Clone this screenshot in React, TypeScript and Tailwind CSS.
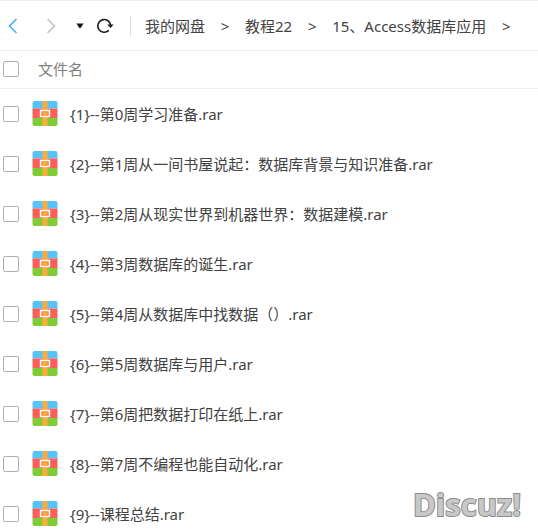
const files = [
  '{1}--第0周学习准备.rar',
  '{2}--第1周从一间书屋说起：数据库背景与知识准备.rar',
  '{3}--第2周从现实世界到机器世界：数据建模.rar',
  '{4}--第3周数据库的诞生.rar',
  '{5}--第4周从数据库中找数据（）.rar',
  '{6}--第5周数据库与用户.rar',
  '{7}--第6周把数据打印在纸上.rar',
  '{8}--第7周不编程也能自动化.rar',
  '{9}--课程总结.rar',
];

const crumbs = ['我的网盘', '教程22', '15、Access数据库应用'];

function Checkbox({ label }: { label: string }) {
  return (
    <input
      type="checkbox"
      aria-label={label}
      className="block size-4 appearance-none rounded-xs border border-[#b0b0b0] bg-white checked:bg-[#3db2f5]"
    />
  );
}

function ArchiveIcon() {
  return (
    <svg viewBox="0 0 26 26" className="block size-[26px]" aria-hidden="true">
      <path d="M0.5 8.5V3Q0.5 1 2.5 1H23.5Q25.5 1 25.5 3V8.5Z" fill="#56c4f8" />
      <path d="M0.5 8.5H25.5V18H0.5Z" fill="#fb5f5c" />
      <path d="M0.5 18H25.5V24Q25.5 26 23.5 26H2.5Q0.5 26 0.5 24Z" fill="#80cc37" />
      <path d="M10.5 1H15.5V26H10.5Z" fill="#fdac3b" />
      <path d="M8.5 10.5H17.5V16.5H8.5Z" fill="#fb8a4c" stroke="#fff" strokeWidth="1.4" />
      <path d="M10.8 11.2H15.2V15.8H10.8Z" fill="#fdac3b" />
    </svg>
  );
}

function Toolbar() {
  return (
    <header className="flex h-[51px] items-center border-y border-[#eeeeee] pl-2">
      <button type="button" aria-label="后退">
        <svg viewBox="0 0 10 16" className="block h-4 w-[10px]" fill="none" stroke="#3db2f5" strokeWidth="1.6">
          <path d="M8.5 1L1.5 8L8.5 15" />
        </svg>
      </button>
      <button type="button" aria-label="前进" className="ml-7">
        <svg viewBox="0 0 10 16" className="block h-4 w-[10px]" fill="none" stroke="#c4c4c4" strokeWidth="1.6">
          <path d="M1.5 1L8.5 8L1.5 15" />
        </svg>
      </button>
      <button type="button" aria-label="历史记录" className="ml-5">
        <svg viewBox="0 0 8 6" className="block h-[6px] w-2" fill="#111">
          <path d="M0.5 0.5H7.5L4.8 4.8Q4 5.6 3.2 4.8Z" />
        </svg>
      </button>
      <button type="button" aria-label="刷新" className="ml-3">
        <svg viewBox="0 0 18 16" className="block h-4 w-[18px]" fill="none" stroke="#1c1c1c" strokeWidth="1.6">
          <path d="M12.8 12.4A6.4 6.4 0 1 1 14.6 7.2" />
          <path d="M11.2 6.4H17.6L14.6 10Z" fill="#1c1c1c" stroke="none" />
        </svg>
      </button>
      <nav aria-label="路径" className="ml-4 flex h-5 items-center border-l border-[#dedede] pl-[14px]">
        {crumbs.map((name) => (
          <span key={name} className="flex items-center whitespace-nowrap">
            <a href="#">{name}</a>
            <span className="w-10 text-center">&gt;</span>
          </span>
        ))}
      </nav>
    </header>
  );
}

export default function App() {
  return (
    <main className="relative h-screen overflow-hidden bg-white font-['Noto_Sans','Noto_Sans_CJK_SC',sans-serif] text-[15px] leading-5 text-[#424242]">
      <Toolbar />
      <table className="w-full text-left">
        <thead>
          <tr className="h-[37px] border-b border-[#f0f0f0]">
            <th className="w-8 pl-[3px]">
              <Checkbox label="全选" />
            </th>
            <th colSpan={2} className="pl-[6px] font-normal text-[#808080]">
              文件名
            </th>
          </tr>
        </thead>
        <tbody>
          {files.map((name) => (
            <tr key={name} className="h-[50px]">
              <td className="w-8 pt-[2px] pl-[3px]">
                <Checkbox label={name} />
              </td>
              <td className="w-[38px]">
                <ArchiveIcon />
              </td>
              <td className="pt-[2px] whitespace-nowrap">{name}</td>
            </tr>
          ))}
        </tbody>
      </table>
      <div className="pointer-events-none absolute right-[17px] bottom-1 font-['Open_Sans',sans-serif] text-[31px] leading-[42px] font-bold text-[#c8c8c8] [-webkit-text-stroke:2px_#8c8c8c] [paint-order:stroke_fill]">
        Discuz!
      </div>
    </main>
  );
}
